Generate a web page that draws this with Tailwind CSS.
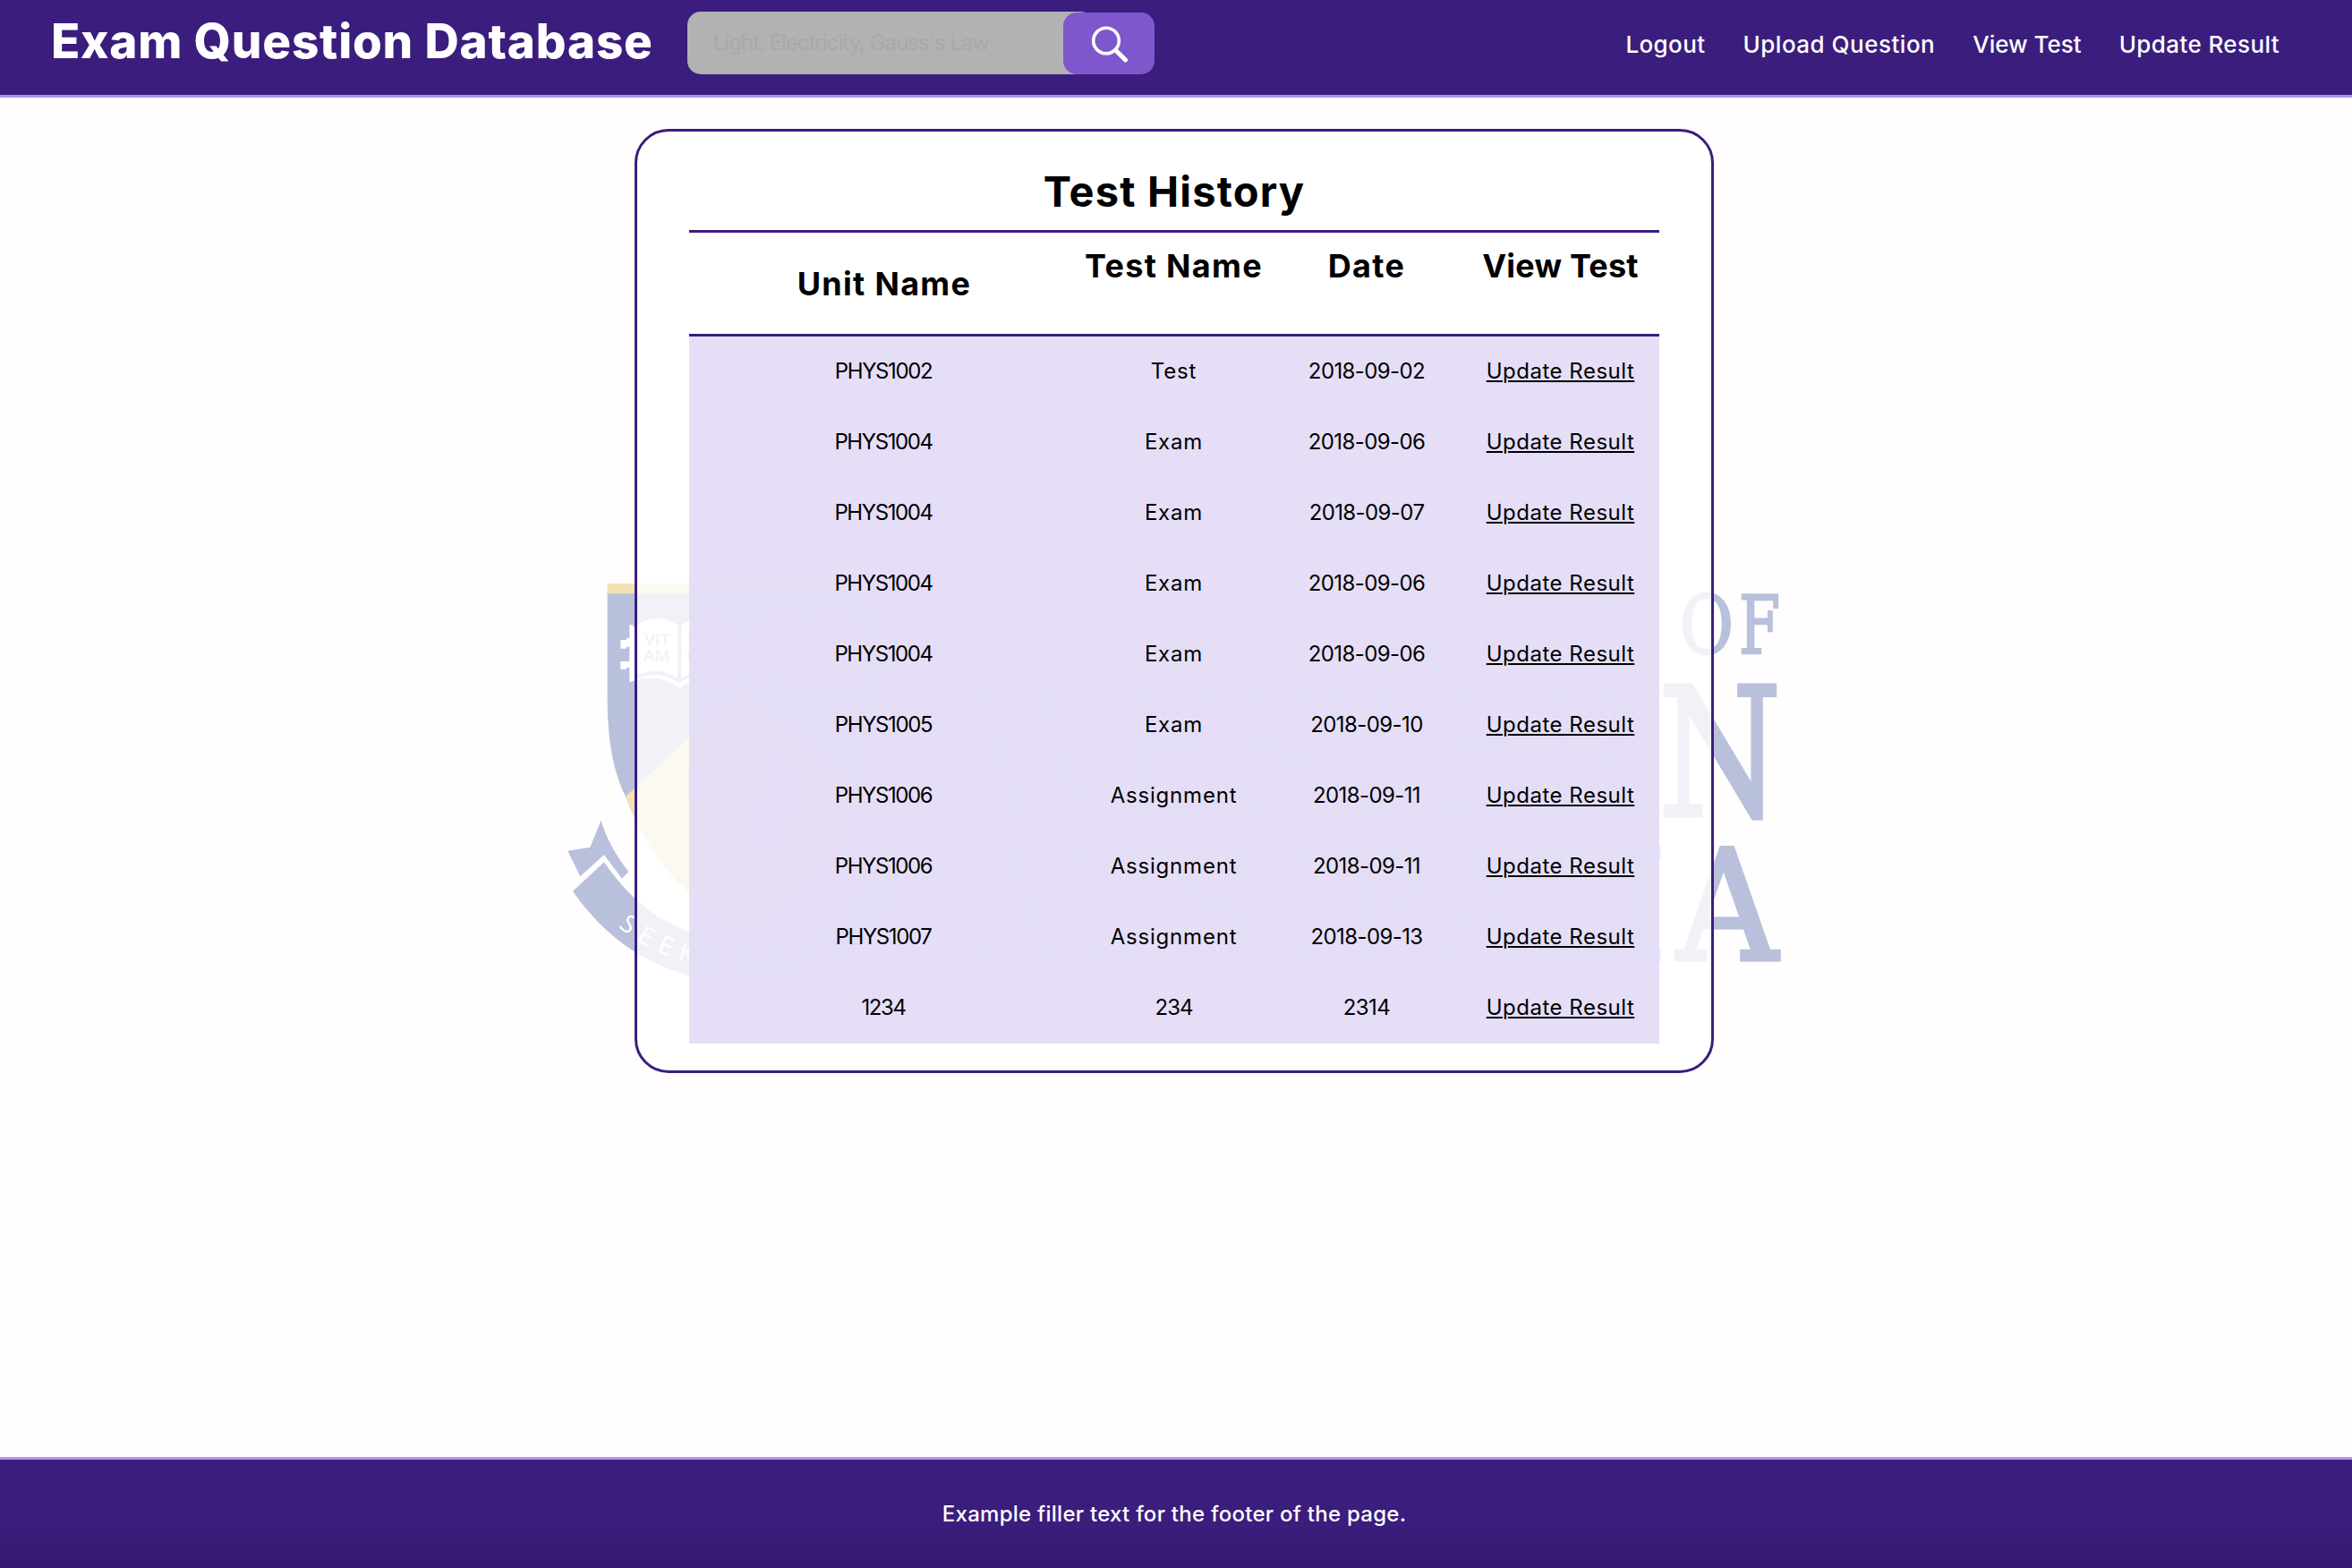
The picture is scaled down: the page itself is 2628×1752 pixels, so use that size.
<!DOCTYPE html>
<html lang="en">
<head>
<meta charset="utf-8">
<title>Exam Question Database</title>
<script src="https://cdn.jsdelivr.net/npm/@tailwindcss/browser@4"></script>
</head>
<body class="relative flex h-[1752px] w-[2628px] flex-col overflow-hidden bg-[#fffdfe] font-['Inter',sans-serif] text-black">

<!-- University crest watermark -->
<svg class="absolute left-[620px] top-[630px] h-[490px] w-[1400px]" viewBox="620 630 1400 490" fill="#b9c0db">
  <g transform="translate(620 630) scale(.33333)">
    <path d="M176 66H1084V105H176Z" fill="#f2e2b3"/>
    <path d="M176 100H1084V440C1084 590 1066 690 1023 780C940 990 830 1120 630 1215C430 1120 320 990 237 780C194 690 176 590 176 440Z"/>
    <path d="M630 415L1023 780C940 990 830 1120 630 1215C430 1120 320 990 237 780Z" fill="#f2e2b3"/>
    <g id="book" fill="#fff">
      <path d="M220 255h20v-6h10v-44h12v8C310 175 370 175 411 206V384C370 355 320 350 270 376V388C325 362 370 370 417 400C465 370 515 362 566 388V376C515 350 465 355 424 384V206C465 175 520 175 558 205h20V396C520 372 465 380 417 417C370 380 320 372 250 397V348h-10v5h-20v-26h30V278h-10v6h-20Z"/>
      <path d="M578 250h32v28h-32zM578 324h32v28h-32z"/>
    </g>
    <use href="#book" x="428"/>
    <g font-family="Open Sans, sans-serif" font-size="56" font-weight="600">
      <text x="300" y="272" textLength="85">VIT</text><text x="298" y="328" textLength="87">AM</text>
      <text x="443" y="272" textLength="97">EXC</text><text x="441" y="328" textLength="99">OLU</text>
      <text x="725" y="272" textLength="95">ERE</text><text x="725" y="328" textLength="95">PER</text>
      <text x="882" y="272" textLength="68">AR</text><text x="872" y="328" textLength="93">TES</text>
    </g>
    <!-- Swan -->
    <path d="M443 720C450 660 490 632 545 632C600 635 618 680 610 740C600 820 560 880 600 940C650 1000 740 990 790 900C800 940 790 990 775 1030C720 1120 560 1120 490 1040C450 970 470 880 520 800C550 740 560 690 530 690C490 690 480 720 455 740L448 790Z" fill="#d2cabc"/>
    <path d="M745 575C800 640 830 740 812 820C800 920 740 980 640 985C560 970 640 930 650 870C660 760 730 680 745 575Z" fill="#fff" opacity=".4"/>
    <g fill="none" stroke="#d2cabc" stroke-width="7"><path d="M745 600L668 760M775 650L665 790M795 700L665 825M805 750L655 860M805 800L645 895M800 850L640 930M780 900L625 965"/></g>
    <!-- Motto ribbon -->
    <path id="tail" d="M155 860L118 950L43 962L85 1048L165 975L225 1055L247 1032C200 970 170 915 155 860Z"/>
    <use href="#tail" transform="translate(1260 0) scale(-1 1)"/>
    <path d="M60 1097L165 1000C275 1160 420 1262 630 1262C840 1262 985 1160 1095 1000L1200 1097C1060 1300 860 1402 630 1402C400 1402 200 1300 60 1097Z"/>
    <path id="motto" d="M212 1215C420 1405 840 1415 1060 1180" fill="none"/>
    <text font-family="Open Sans, sans-serif" font-size="84" fill="#fff"><textPath href="#motto" textLength="860">SEEK WISDOM</textPath></text>
  </g>
  <g font-family="DejaVu Serif, serif" stroke="#b9c0db">
    <g font-size="89" stroke-width="2.5">
      <text x="1081" y="730" textLength="168" lengthAdjust="spacingAndGlyphs">THE</text>
      <text x="1298" y="730" textLength="549" lengthAdjust="spacingAndGlyphs">UNIVERSITY</text>
      <text x="1877" y="730" textLength="60" lengthAdjust="spacingAndGlyphs">O</text>
      <text x="1943" y="730" textLength="46" lengthAdjust="spacingAndGlyphs">F</text>
    </g>
    <g font-size="199" stroke-width="5">
      <text x="1080" y="911" textLength="759" lengthAdjust="spacingAndGlyphs">WESTER</text>
      <text x="1853" y="911" textLength="137" lengthAdjust="spacingAndGlyphs">N</text>
    </g>
    <g font-size="171" stroke-width="5">
      <text x="1081" y="1071.5" textLength="781" lengthAdjust="spacingAndGlyphs">AUSTRALI</text>
      <text x="1874" y="1071.5" textLength="112" lengthAdjust="spacingAndGlyphs">A</text>
    </g>
  </g>
</svg>

<header class="relative flex h-[109px] shrink-0 items-start border-b-3 border-[#ae92e6] bg-[#3b1d7d] pl-[57px] text-white">
  <h1 class="mt-[14px] w-[711px] whitespace-nowrap text-[53px] leading-[64px] font-extrabold tracking-[0.8px]">Exam Question Database</h1>
  <form class="mt-[13px] flex">
    <div class="flex h-[70px] w-[454px] items-center rounded-[15px] bg-[#b2b2b2] pl-[29px] text-[24px] tracking-[-1px] text-[#a9a9a9]">Light, Electricity, Gauss's Law</div>
    <button type="button" aria-label="Search" class="mt-px -ml-[34px] flex h-[69px] w-[102px] items-center justify-center rounded-[15px] bg-[#7e57cd]">
      <svg class="ml-[2px] h-[42px] w-[42px]" viewBox="0 0 42 42" fill="none" stroke="#fff"><circle cx="17" cy="17.5" r="14.3" stroke-width="3.6"/><path d="M27.5 28L38.5 39" stroke-width="5" stroke-linecap="round"/></svg>
    </button>
  </form>
  <nav class="mt-[34px] ml-auto mr-[81px] flex gap-[42px] whitespace-nowrap text-[26px] leading-[32px] font-medium">
    <a class="tracking-[0.4px]">Logout</a><a class="tracking-[0.5px]">Upload Question</a><a>View Test</a><a class="tracking-[0.4px]">Update Result</a>
  </nav>
</header>

<main class="relative mx-auto mt-[35px] h-[1055px] w-[1206px] -translate-x-[2px] rounded-[38px] border-3 border-[#3b1d7d] bg-white/80 px-[58px] pt-[38px]">
  <h2 class="h-[72px] text-center text-[47px] leading-[58px] font-bold tracking-[1.2px]">Test History</h2>
  <div class="grid h-[119px] grid-cols-[436px_211px_220px_213px] border-y-3 border-[#3b1d7d] bg-white/40 pt-[15px] pr-[4px] text-center text-[36px] leading-[44px] font-bold tracking-[1.3px] whitespace-nowrap">
    <div class="pt-[20px]">Unit Name</div><div>Test Name</div><div>Date</div><div class="tracking-[0.2px]">View Test</div>
  </div>
  <div id="rows" class="bg-[#e3dbf5]/93 text-center text-[24px] leading-[78px] whitespace-nowrap"></div>
</main>

<footer class="mt-auto flex h-[124px] shrink-0 justify-center border-t-3 border-[#ae92e6] bg-linear-to-b from-[#3b1d7d] from-60% to-[#341970] pt-[45px] pr-[4px] text-[24px] leading-[32px] font-medium tracking-[0.26px] text-white">Example filler text for the footer of the page.</footer>

<script>
const tests = [
  ['PHYS1002', 'Test', '2018-09-02'],
  ['PHYS1004', 'Exam', '2018-09-06'],
  ['PHYS1004', 'Exam', '2018-09-07'],
  ['PHYS1004', 'Exam', '2018-09-06'],
  ['PHYS1004', 'Exam', '2018-09-06'],
  ['PHYS1005', 'Exam', '2018-09-10'],
  ['PHYS1006', 'Assignment', '2018-09-11'],
  ['PHYS1006', 'Assignment', '2018-09-11'],
  ['PHYS1007', 'Assignment', '2018-09-13'],
  ['1234', '234', '2314'],
];
document.getElementById('rows').innerHTML = tests.map(([unit, name, date]) => `
  <div class="grid h-[79px] grid-cols-[436px_211px_220px_213px]">
    <div class="pr-[2px] tracking-[-1.4px]">${unit}</div>
    <div class="${/\d/.test(name) ? 'tracking-[-1px]' : 'tracking-[0.8px]'}">${name}</div>
    <div class="tracking-[-0.6px]">${date}</div>
    <div><a class="tracking-[0.5px] underline decoration-2 underline-offset-[2px]">Update Result</a></div>
  </div>`).join('');
</script>
</body>
</html>
